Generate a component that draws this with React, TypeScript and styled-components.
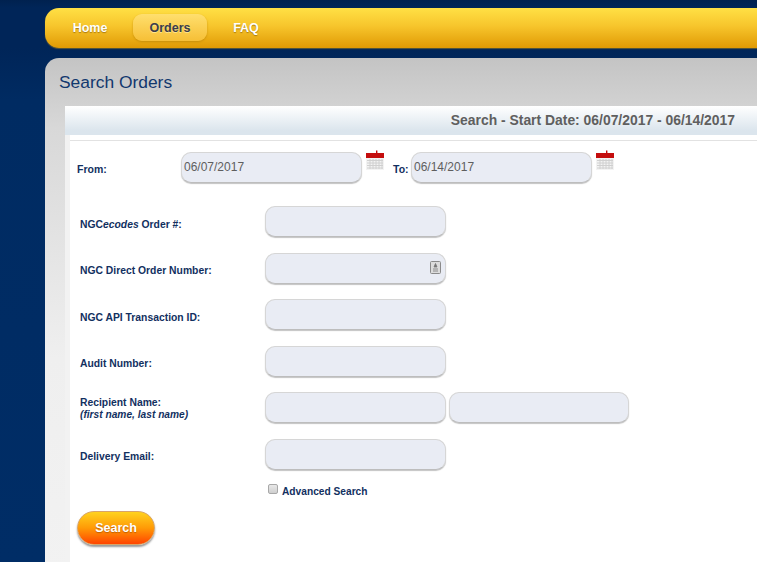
import React from "react";
import styled, { createGlobalStyle } from "styled-components";

const GlobalStyle = createGlobalStyle`
  html, body {
    margin: 0;
    padding: 0;
    height: 100%;
    overflow: hidden;
    background: #002b62;
    font-family: "Liberation Sans", Arial, sans-serif;
  }
`;

const Page = styled.div`
  width: 757px;
  height: 562px;
  overflow: hidden;
  box-sizing: border-box;
  padding: 8px 0 0 45px;
  background: linear-gradient(#00214f 0, #002558 8px, #002558 48px, #002b62 100px, #002d66 100%);
`;

const NavBar = styled.nav`
  width: 760px;
  height: 40px;
  box-sizing: border-box;
  display: flex;
  align-items: center;
  padding: 0 0 1px 8px;
  border-radius: 14px 0 0 14px;
  background: linear-gradient(#ffe045, #f7c52c 45%, #e09a04);
  box-shadow: 0 1px 1px #5a5a3a;
`;

const NavItem = styled.a<{ $active?: boolean; $gap?: number }>`
  width: 74px;
  height: 27px;
  margin-right: ${(p) => p.$gap ?? 0}px;
  display: flex;
  align-items: center;
  justify-content: center;
  border-radius: 9px;
  font-size: 12.5px;
  font-weight: bold;
  color: ${(p) => (p.$active ? "#3c3c4c" : "#fff")};
  text-shadow: ${(p) => (p.$active ? "0 1px 0 #ffe48a" : "0 1px 1px #a87a10")};
  background: ${(p) => (p.$active ? "linear-gradient(#ffdf6e, #f6bf36)" : "none")};
  box-shadow: ${(p) => (p.$active ? "0 1px 2px #c8900c" : "none")};
`;

const Panel = styled.main`
  width: 760px;
  height: 520px;
  margin-top: 10px;
  box-sizing: border-box;
  padding: 13px 0 0 14px;
  border-radius: 14px 0 0 0;
  background: linear-gradient(#c4c4c4, #d8d8d8 70px, #efefef 300px, #f2f2f2);
`;

const Title = styled.h1`
  margin: 0 0 13px;
  height: 22px;
  font-size: 17.4px;
  line-height: 22px;
  font-weight: normal;
  color: #12386e;
`;

const Card = styled.section`
  margin-left: 6px;
  height: 470px;
  background: #fff;
  box-sizing: border-box;
  padding-left: 5px;
  background-image: linear-gradient(90deg, #f2f2f2 5px, #fff 5px);
`;

const CardHeader = styled.div`
  height: 29px;
  margin-left: -5px;
  box-sizing: border-box;
  padding: 0 70px 2px 0;
  display: flex;
  align-items: center;
  justify-content: flex-end;
  font-size: 13.9px;
  font-weight: bold;
  color: #5f5f5f;
  background: linear-gradient(#fff, #dbe5ed 85%);
`;

const CardBody = styled.div`
  margin-top: 5px;
  border-top: 1px solid #e2e2e2;
  padding: 11px 0 0 7px;
`;

const DateRow = styled.div`
  display: flex;
  align-items: flex-start;
  height: 54px;
`;

const DateLabel = styled.label<{ $width: number }>`
  width: ${(p) => p.$width}px;
  flex: none;
  padding-top: 11px;
  font-size: 10.5px;
  font-weight: bold;
  color: #12305f;
`;

const Field = styled.div`
  width: 180.5px;
  height: 31px;
  flex: none;
  box-sizing: border-box;
  display: flex;
  align-items: center;
  padding: 0 3px 1px 2px;
  border: 1px solid #d6d6d6;
  border-bottom-color: #bdbdbd;
  border-radius: 10px;
  background: #e9ecf4;
  box-shadow: 0 1px 1px #c4c4c4;
  font-size: 12px;
  color: #5e5e5e;
`;

const CalendarButton = styled.svg`
  width: 20px;
  height: 21px;
  flex: none;
  margin: -2px 8px 0 3.5px;
`;

const Rows = styled.div`
  padding-left: 3px;
`;

const Row = styled.div`
  display: flex;
  align-items: center;
  height: 31px;
  margin-bottom: 15.5px;
`;

const RowLabel = styled.label<{ $twoLine?: boolean }>`
  width: 185px;
  flex: none;
  padding-top: ${(p) => (p.$twoLine ? 3 : 6)}px;
  font-size: 10.35px;
  line-height: 12px;
  font-weight: bold;
  color: #12305f;
`;

const Hint = styled.em`
  display: block;
  font-size: 10.2px;
`;

const RecipientGap = styled.span`
  width: 3px;
  flex: none;
`;

const AdvancedRow = styled.label`
  display: flex;
  align-items: center;
  margin: -1px 0 0 188px;
  height: 14px;
  font-size: 10.2px;
  font-weight: bold;
  color: #12305f;
`;

const CheckBox = styled.span`
  width: 10px;
  height: 10px;
  margin: -5px 4px 0 0;
  flex: none;
  box-sizing: border-box;
  border: 1px solid #a8a8a8;
  border-radius: 2px;
  background: linear-gradient(#e8e8e8, #cfcfcf);
`;

const SearchButton = styled.button`
  display: block;
  width: 78px;
  height: 34px;
  margin-top: 13px;
  padding: 0;
  border: 1px solid #d8a468;
  border-radius: 17px;
  font-family: inherit;
  font-size: 12.5px;
  font-weight: bold;
  color: #fff;
  text-shadow: 0 1px 1px #c06000;
  background: linear-gradient(#ffd21e, #ff9a06 50%, #ff4400);
  box-shadow: 0 2px 2px #999;
`;

const KeySvg = styled.svg`
  width: 11px;
  height: 13px;
  margin-left: auto;
  margin-right: 1px;
`;

const Calendar = () => (
  <CalendarButton viewBox="0 0 20 21">
    <rect x="1" y="8" width="18" height="12" fill="#f3f3f3" />
    <path d="M2 10.5h16M2 13h16M2 15.5h16M2 18h16M5 9v10M8 9v10M11 9v10M14 9v10M17 9v10" stroke="#d0d0d0" strokeWidth="1" />
    <rect x="1" y="3" width="18" height="5" fill="#c40d0d" />
    <rect x="11" y="0.5" width="1.4" height="3" fill="#c40d0d" />
  </CalendarButton>
);

const KeyIcon = () => (
  <KeySvg viewBox="0 0 11 13">
    <rect x="0.5" y="0.5" width="10" height="12" rx="1" fill="#dcdcdc" stroke="#8a8a8a" />
    <path d="M5.5 2.5 7 6H4zM3 8h5M3 10h5" fill="#767676" stroke="#767676" strokeWidth="0.8" />
  </KeySvg>
);

const App: React.FC = () => (
  <>
    <GlobalStyle />
    <Page>
      <NavBar>
        <NavItem $gap={6}>Home</NavItem>
        <NavItem $active $gap={2}>Orders</NavItem>
        <NavItem>FAQ</NavItem>
      </NavBar>
      <Panel>
        <Title>Search Orders</Title>
        <Card>
          <CardHeader>Search - Start Date: 06/07/2017 - 06/14/2017</CardHeader>
          <CardBody>
            <DateRow>
              <DateLabel $width={104}>From:</DateLabel>
              <Field>06/07/2017</Field>
              <Calendar />
              <DateLabel $width={18}>To:</DateLabel>
              <Field>06/14/2017</Field>
              <Calendar />
            </DateRow>
            <Rows>
              <Row>
                <RowLabel>
                  NGC<em>ecodes</em> Order #:
                </RowLabel>
                <Field />
              </Row>
              <Row>
                <RowLabel>NGC Direct Order Number:</RowLabel>
                <Field>
                  <KeyIcon />
                </Field>
              </Row>
              <Row>
                <RowLabel>NGC API Transaction ID:</RowLabel>
                <Field />
              </Row>
              <Row>
                <RowLabel>Audit Number:</RowLabel>
                <Field />
              </Row>
              <Row>
                <RowLabel $twoLine>
                  Recipient Name:
                  <Hint>(first name, last name)</Hint>
                </RowLabel>
                <Field />
                <RecipientGap />
                <Field />
              </Row>
              <Row>
                <RowLabel>Delivery Email:</RowLabel>
                <Field />
              </Row>
              <AdvancedRow>
                <CheckBox />
                Advanced Search
              </AdvancedRow>
            </Rows>
            <SearchButton>Search</SearchButton>
          </CardBody>
        </Card>
      </Panel>
    </Page>
  </>
);

export default App;
